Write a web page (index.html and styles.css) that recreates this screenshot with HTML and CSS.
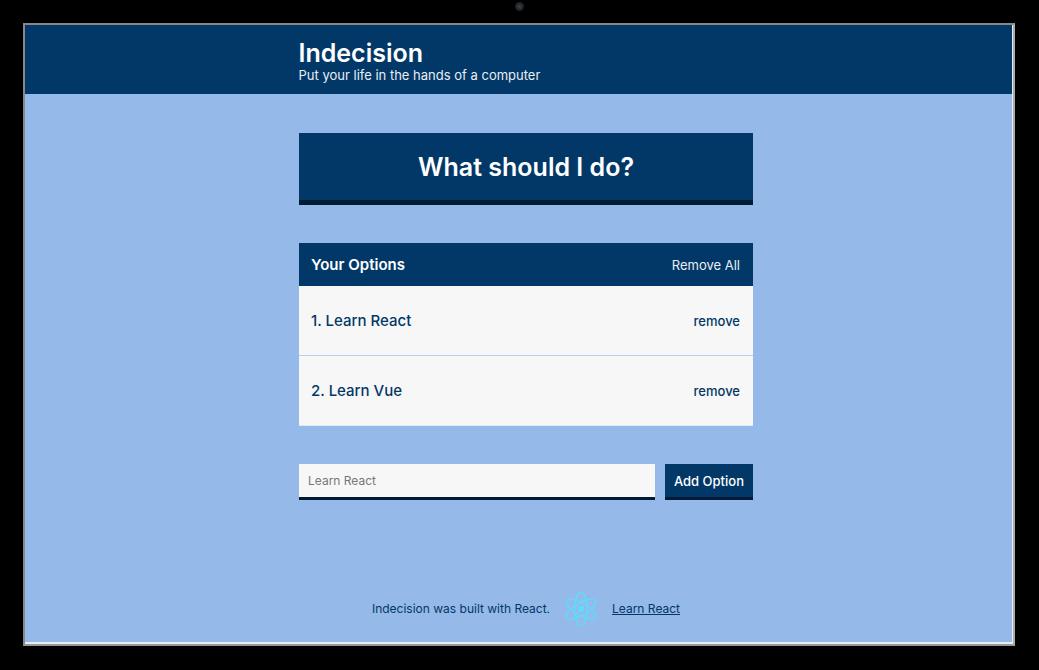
FILE: index.html
```html
<!DOCTYPE html>
<html lang="en">
<head>
<meta charset="utf-8">
<meta name="viewport" content="width=device-width, initial-scale=1">
<title>Indecision</title>
<link rel="stylesheet" href="styles.css">
</head>
<body>
<div class="device">
  <span class="camera"></span>
  <div class="screen">
    <header class="header">
      <div class="container">
        <h1 class="header-title">Indecision</h1>
        <p class="header-subtitle">Put your life in the hands of a computer</p>
      </div>
    </header>
    <main class="main">
      <div class="container stack">
        <button class="big-button" type="button">What should I do?</button>
        <section class="widget">
          <div class="widget-header">
            <h2 class="widget-title">Your Options</h2>
            <button class="link-button link-button-light" type="button">Remove All</button>
          </div>
          <div class="option">
            <p class="option-text">1. Learn React</p>
            <button class="link-button" type="button">remove</button>
          </div>
          <div class="option">
            <p class="option-text">2. Learn Vue</p>
            <button class="link-button" type="button">remove</button>
          </div>
        </section>
        <form class="add-option">
          <input class="add-option-input" type="text" placeholder="Learn React" aria-label="Option">
          <button class="button" type="button">Add Option</button>
        </form>
      </div>
    </main>
    <footer class="footer">
      <span>Indecision was built with React.</span>
      <svg class="logo" viewBox="-17 -18 34 36" aria-hidden="true">
        <circle r="3.2" fill="currentColor"/>
        <g fill="none" stroke="currentColor" stroke-width="1.5">
          <ellipse rx="6.3" ry="16.7"/>
          <ellipse rx="6.3" ry="16.7" transform="rotate(60)"/>
          <ellipse rx="6.3" ry="16.7" transform="rotate(120)"/>
        </g>
      </svg>
      <a class="footer-link" href="#">Learn React</a>
    </footer>
  </div>
</div>
</body>
</html>
```
FILE: styles.css
```css
* {
  box-sizing: border-box;
}

body {
  margin: 0;
  background: #000;
  color: #023867;
  font-family: Inter, "Liberation Sans", sans-serif;
  font-size: 13px;
  line-height: 16px;
}

h1, h2, p {
  margin: 0;
}

button, input {
  border: 0;
  border-radius: 0;
  font: inherit;
}

button {
  cursor: pointer;
}

.device {
  position: relative;
  display: flex;
  min-height: 100vh;
  padding: 23px 24px 24px 23px;
}

.camera {
  position: absolute;
  top: 2px;
  left: 50%;
  width: 9px;
  height: 9px;
  margin-left: -5px;
  border-radius: 50%;
  background: radial-gradient(circle, #3b4248 0, #24282b 50%, #101010 100%);
}

.screen {
  display: flex;
  flex: 1;
  flex-direction: column;
  border: 2px solid #888;
  border-right-color: #aaa;
  border-bottom-color: #999;
  background: #95b9e9;
  box-shadow: inset -1px -2px #e8edf3;
}

.header {
  margin-right: 1px;
  padding: 15px 0 11px 14px;
  background: #023867;
  color: #fff;
}

.container {
  width: 454px;
  max-width: 100%;
  margin: 0 auto;
}

.header-title {
  font-size: 25px;
  font-weight: 600;
  line-height: 27px;
}

.header-subtitle {
  color: #e8eef3;
}

.main {
  padding: 39px 0 38px 14px;
}

.stack {
  display: flex;
  flex-direction: column;
  gap: 38px;
}

.big-button {
  height: 72px;
  border-bottom: 5px solid #001c35;
  background: #023867;
  color: #fff;
  font-size: 25px;
  font-weight: 600;
}

.widget-header {
  display: flex;
  align-items: center;
  justify-content: space-between;
  height: 43px;
  padding: 0 13px 0 12px;
  background: #023867;
  color: #fff;
}

.widget-title {
  font-size: 15px;
  font-weight: 600;
}

.link-button {
  padding: 0;
  background: none;
  color: #023867;
  font-weight: 500;
}

.link-button-light {
  color: #e8eef3;
  font-weight: 400;
}

.option {
  display: flex;
  align-items: center;
  justify-content: space-between;
  height: 70px;
  padding: 0 13px 0 12px;
  border-bottom: 1px solid #b5d0f3;
  background: #f7f7f7;
}

.option:last-child {
  border-bottom-color: #e0e9f5;
}

.option-text {
  font-size: 15px;
  font-weight: 500;
}

.add-option {
  display: flex;
  gap: 10px;
}

.add-option-input {
  flex: 1;
  min-width: 0;
  height: 36px;
  padding: 0 9px;
  border-bottom: 3px solid #001c35;
  background: #f7f7f7;
  font-size: 12px;
}

.add-option-input::placeholder {
  color: #777;
  opacity: 1;
}

.button {
  height: 36px;
  padding: 0 9px;
  border-bottom: 3px solid #001c35;
  background: #023867;
  color: #fff;
  font-weight: 500;
}

.footer {
  display: flex;
  align-items: center;
  justify-content: center;
  gap: 14px;
  margin-top: auto;
  padding: 0 0 17px 14px;
  font-size: 12px;
}

.logo {
  width: 34px;
  height: 36px;
  color: #61dafb;
}

.footer-link {
  color: inherit;
}
```
